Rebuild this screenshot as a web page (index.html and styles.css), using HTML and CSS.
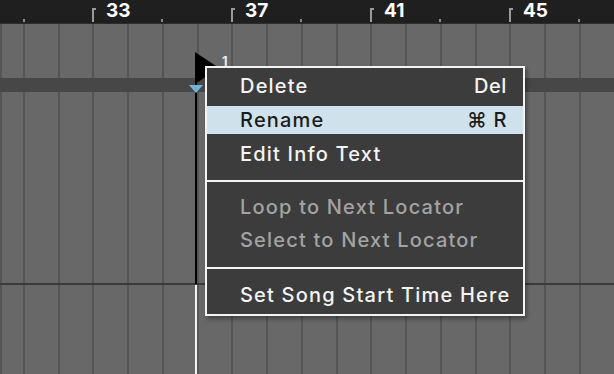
FILE: index.html
```html
<!DOCTYPE html>
<html lang="en">
<head>
  <meta charset="UTF-8">
  <title>Locator Menu</title>
  <link rel="stylesheet" href="styles.css">
</head>
<body>
  <div class="arrangement">
    <!-- bar ruler -->
    <div class="ruler">
      <div class="bar-group bar-lead"><span class="dot"></span></div>
      <div class="bar-group"><span class="tick"></span><span class="num">33</span><span class="dot"></span></div>
      <div class="bar-group"><span class="tick"></span><span class="num">37</span><span class="dot"></span></div>
      <div class="bar-group"><span class="tick"></span><span class="num">41</span><span class="dot"></span></div>
      <div class="bar-group"><span class="tick"></span><span class="num">45</span><span class="dot"></span></div>
    </div>

    <div class="lanes">
      <div class="lane lane-top"></div>
      <div class="band"></div>
      <div class="lane lane-mid"></div>
      <div class="divider"></div>
      <div class="lane lane-low"></div>
    </div>

    <!-- locator marker -->
    <div class="locator">
      <svg class="flag" width="26" height="32" viewBox="0 0 26 32">
        <polygon points="0,0 24,16 0,32" fill="#000"/>
      </svg>
      <span class="locator-name">1</span>
      <span class="line-dark"></span>
      <span class="line-light"></span>
      <svg class="insert" width="14" height="9" viewBox="0 0 14 9">
        <polygon points="0,0 14,0 7,8" fill="#6fb4d6"/>
      </svg>
    </div>

    <!-- context menu -->
    <div class="menu">
      <div class="group group-first">
        <div class="item"><span>Delete</span><span class="key">Del</span></div>
        <div class="item active"><span>Rename</span><span class="key">⌘ R</span></div>
        <div class="item"><span>Edit Info Text</span></div>
      </div>
      <div class="sep"></div>
      <div class="group group-mid">
        <div class="item disabled"><span>Loop to Next Locator</span></div>
        <div class="item disabled"><span>Select to Next Locator</span></div>
      </div>
      <div class="sep"></div>
      <div class="group group-last">
        <div class="item"><span>Set Song Start Time Here</span></div>
      </div>
    </div>
  </div>
</body>
</html>
```

FILE: styles.css
```css
* {
  margin: 0;
  padding: 0;
  box-sizing: border-box;
}

body {
  width: 614px;
  height: 374px;
  overflow: hidden;
  background: #686868;
  font-family: Inter, "Noto Sans", sans-serif;
}

.arrangement {
  position: relative;
  width: 614px;
  height: 374px;
  overflow: hidden;
  display: flex;
  flex-direction: column;
}

/* ruler */
.ruler {
  height: 24px;
  background: #1f1f1f;
  display: flex;
  overflow: hidden;
  border-bottom: 1px solid #2c2c2c;
}

.bar-group {
  position: relative;
  flex: 0 0 139px;
  height: 100%;
}

.bar-group.bar-lead {
  flex-basis: 92px;
}

.bar-lead .dot {
  left: 23px;
}

.tick {
  position: absolute;
  left: 0;
  top: 8px;
  width: 4px;
  height: 14px;
  border-left: 2px solid #9a9a9a;
  border-top: 2px solid #9a9a9a;
}

.num {
  position: absolute;
  left: 14px;
  top: 0;
  color: #fff;
  font-weight: 700;
  font-size: 19px;
  line-height: 22px;
}

.dot {
  position: absolute;
  left: 69px;
  top: 19px;
  width: 2px;
  height: 3px;
  background: #8a8a8a;
}

/* lanes with bar grid */
.lanes {
  flex: 1;
  display: flex;
  flex-direction: column;
  background-image: repeating-linear-gradient(to right, #555 0 2px, transparent 2px 34.75px);
  background-position: 23px 0;
}

.lane-top {
  height: 54px;
}

.band {
  height: 14px;
  background: #474747;
}

.lane-mid {
  height: 191px;
}

.divider {
  height: 2px;
  background: #3a3a3a;
}

.lane-low {
  flex: 1;
}

/* locator */
.locator .flag {
  position: absolute;
  left: 195px;
  top: 52px;
}

.locator-name {
  position: absolute;
  left: 222px;
  top: 55px;
  color: #e8e8e8;
  font-size: 13px;
  font-weight: 700;
  line-height: 12px;
}

.line-dark {
  position: absolute;
  left: 195px;
  top: 60px;
  width: 2px;
  height: 224px;
  background: #000;
}

.line-light {
  position: absolute;
  left: 195px;
  top: 285px;
  width: 2px;
  bottom: 0;
  background: #f2f2f2;
}

.locator .insert {
  position: absolute;
  left: 189px;
  top: 85px;
}

/* context menu */
.menu {
  position: absolute;
  left: 205px;
  top: 66px;
  width: 320px;
  height: 250px;
  background: #3c3c3c;
  border: 2px solid #f4f4f4;
  box-shadow: 2px 3px 4px rgba(0, 0, 0, 0.35);
  color: #f4f4f4;
  font-size: 20px;
  font-weight: 500;
  letter-spacing: 1.2px;
  white-space: nowrap;
}

.group {
  display: flex;
  flex-direction: column;
}

.group-first {
  gap: 6px;
  padding: 4px 0 12px;
}

.group-mid {
  gap: 5px;
  padding: 11px 0 13px;
}

.group-last {
  padding: 12px 0 0;
}

.item {
  height: 28px;
  display: flex;
  align-items: center;
  justify-content: space-between;
  padding: 0 16px 0 33px;
}

.item .key {
  letter-spacing: 0.6px;
}

.item.active {
  background: #cfe2ec;
  color: #1c1c1c;
}

.item.disabled {
  color: #a3a3a3;
}

.sep {
  height: 2px;
  background: #f4f4f4;
}
```
